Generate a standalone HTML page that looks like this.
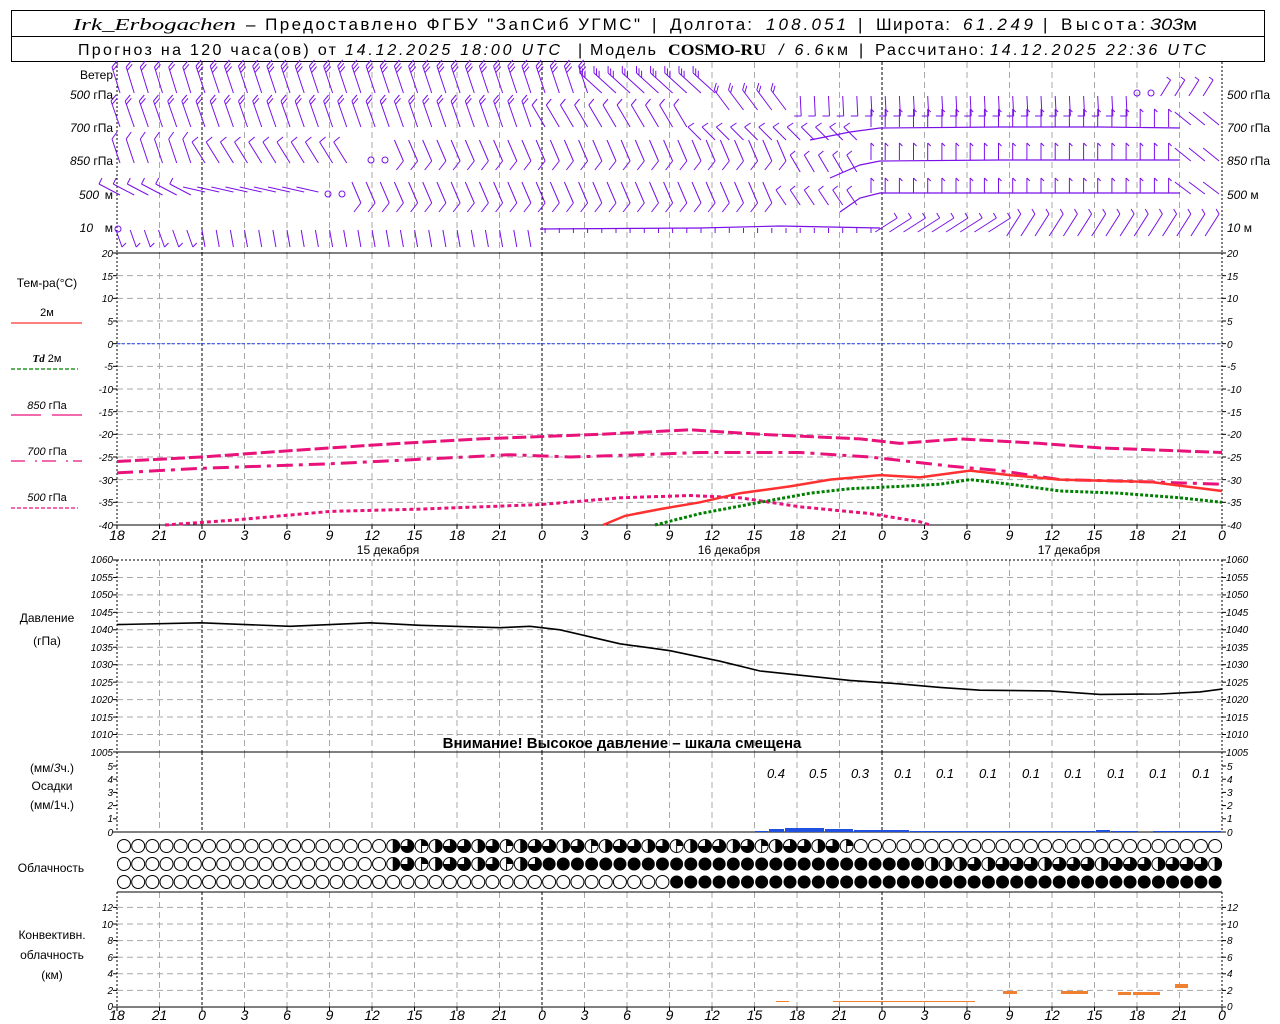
<!DOCTYPE html>
<html><head><meta charset="utf-8"><style>
html,body{margin:0;padding:0;background:#fff;}
svg{display:block;}
text{font-family:"Liberation Sans",sans-serif;fill:#000;}
.it{font-style:italic;}
.ax{font-size:10px;font-style:italic;}
.lb{font-size:12px;}
</style></head><body>
<svg id="s" width="1280" height="1024" viewBox="0 0 1280 1024" xmlns="http://www.w3.org/2000/svg">
<rect x="0" y="0" width="1280" height="1024" fill="#fff"/>
<rect x="11.5" y="10.5" width="1253" height="51" fill="none" stroke="#000"/>
<line x1="11" y1="36.5" x2="1265" y2="36.5" stroke="#000"/>
<g font-size="17">
<text x="73" y="30" textLength="163" lengthAdjust="spacingAndGlyphs" style="font-family:'Liberation Serif',serif;font-style:italic">Irk_Erbogachen</text>
<text x="246" y="30" textLength="394" lengthAdjust="spacing">– Предоставлено ФГБУ "ЗапСиб УГМС"</text>
<text x="652" y="30">|</text>
<text x="670" y="30" textLength="82" lengthAdjust="spacing">Долгота:</text>
<text x="766" y="30" class="it" textLength="80" lengthAdjust="spacing">108.051</text>
<text x="858" y="30">|</text>
<text x="876" y="30" textLength="74" lengthAdjust="spacing">Широта:</text>
<text x="963" y="30" class="it" textLength="70" lengthAdjust="spacing">61.249</text>
<text x="1043" y="30">|</text>
<text x="1061" y="30" textLength="84" lengthAdjust="spacing">Высота:</text>
<text x="1150" y="30" textLength="47" lengthAdjust="spacingAndGlyphs"><tspan class="it">303</tspan>м</text>
</g>
<g font-size="16">
<text x="78" y="55" textLength="258" lengthAdjust="spacing">Прогноз на 120 часа(ов) от</text>
<text x="345" y="55" class="it" textLength="215" lengthAdjust="spacing">14.12.2025 18:00 UTC</text>
<text x="578" y="55" textLength="78" lengthAdjust="spacing">| Модель</text>
<text x="668" y="55" font-weight="bold" textLength="98" lengthAdjust="spacingAndGlyphs" style="font-family:'Liberation Serif',serif">COSMO-RU</text>
<text x="779" y="55" textLength="69" lengthAdjust="spacing"><tspan class="it">/ 6.6</tspan>км</text>
<text x="859" y="55">|</text>
<text x="875" y="55" textLength="109" lengthAdjust="spacing">Рассчитано:</text>
<text x="990" y="55" class="it" textLength="216" lengthAdjust="spacing">14.12.2025 22:36 UTC</text>
</g>
<g id="grid"></g>
<g id="plot"></g>
<g class="lb" font-size="11">
<text x="113" y="79" text-anchor="end">Ветер</text>
<text x="113" y="99" text-anchor="end"><tspan class="it">500</tspan> гПа</text>
<text x="113" y="132" text-anchor="end"><tspan class="it">700</tspan> гПа</text>
<text x="113" y="165" text-anchor="end"><tspan class="it">850</tspan> гПа</text>
<text x="99" y="199" text-anchor="end" class="it">500</text><text x="113" y="199" text-anchor="end">м</text>
<text x="93" y="232" text-anchor="end" class="it">10</text><text x="113" y="232" text-anchor="end">м</text>
<text x="1227" y="99"><tspan class="it">500</tspan> гПа</text>
<text x="1227" y="132"><tspan class="it">700</tspan> гПа</text>
<text x="1227" y="165"><tspan class="it">850</tspan> гПа</text>
<text x="1227" y="199"><tspan class="it">500</tspan> м</text>
<text x="1227" y="232"><tspan class="it">10</tspan>   м</text>
</g>
<g font-size="12" text-anchor="middle">
<text x="47" y="287">Тем-ра(°С)</text>
<text x="47" y="316" font-size="11">2м</text>
<text x="47" y="362" font-size="11"><tspan class="it" font-weight="bold" style="font-family:'Liberation Serif',serif">Td</tspan>  2м</text>
<text x="47" y="409" font-size="11"><tspan class="it">850</tspan> гПа</text>
<text x="47" y="455" font-size="11"><tspan class="it">700</tspan> гПа</text>
<text x="47" y="501" font-size="11"><tspan class="it">500</tspan> гПа</text>
</g>
<line x1="11" y1="323" x2="82" y2="323" stroke="#ff3030" stroke-width="1.2"/>
<line x1="11" y1="369" x2="78" y2="369" stroke="#008000" stroke-width="1.2" stroke-dasharray="4 2"/>
<line x1="11" y1="415" x2="41" y2="415" stroke="#e8127a" stroke-width="1.2"/>
<line x1="52" y1="415" x2="82" y2="415" stroke="#e8127a" stroke-width="1.2"/>
<line x1="11" y1="461" x2="82" y2="461" stroke="#e8127a" stroke-width="1.2" stroke-dasharray="14 10 2 5"/>
<line x1="11" y1="508" x2="78" y2="508" stroke="#e8127a" stroke-width="1.2" stroke-dasharray="4 2"/>
<g class="ax" text-anchor="end">
<text x="113" y="257">20</text><text x="113" y="280">15</text><text x="113" y="302">10</text><text x="113" y="325">5</text><text x="113" y="348">0</text><text x="113" y="370">-5</text><text x="113" y="393">-10</text><text x="113" y="416">-15</text><text x="113" y="438">-20</text><text x="113" y="461">-25</text><text x="113" y="484">-30</text><text x="113" y="506">-35</text><text x="113" y="529">-40</text>
</g>
<g class="ax">
<text x="1227" y="257">20</text><text x="1227" y="280">15</text><text x="1227" y="302">10</text><text x="1227" y="325">5</text><text x="1227" y="348">0</text><text x="1227" y="370">-5</text><text x="1227" y="393">-10</text><text x="1227" y="416">-15</text><text x="1227" y="438">-20</text><text x="1227" y="461">-25</text><text x="1227" y="484">-30</text><text x="1227" y="506">-35</text><text x="1227" y="529">-40</text>
</g>
<g font-size="14" class="it" text-anchor="middle">
<text x="117" y="540">18</text><text x="159.5" y="540">21</text><text x="202" y="540">0</text><text x="244.5" y="540">3</text><text x="287" y="540">6</text><text x="329.5" y="540">9</text><text x="372" y="540">12</text><text x="414.5" y="540">15</text><text x="457" y="540">18</text><text x="499.5" y="540">21</text><text x="542" y="540">0</text><text x="584.5" y="540">3</text><text x="627" y="540">6</text><text x="669.5" y="540">9</text><text x="712" y="540">12</text><text x="754.5" y="540">15</text><text x="797" y="540">18</text><text x="839.5" y="540">21</text><text x="882" y="540">0</text><text x="924.5" y="540">3</text><text x="967" y="540">6</text><text x="1009.5" y="540">9</text><text x="1052" y="540">12</text><text x="1094.5" y="540">15</text><text x="1137" y="540">18</text><text x="1179.5" y="540">21</text><text x="1222" y="540">0</text>
</g>
<g font-size="12" text-anchor="middle">
<text x="388" y="554">15 декабря</text><text x="729" y="554">16 декабря</text><text x="1069" y="554">17 декабря</text>
</g>
<g font-size="12" text-anchor="middle"><text x="47" y="622">Давление</text><text x="47" y="645">(гПа)</text></g>
<g class="ax" text-anchor="end" font-size="9">
<text x="113" y="563">1060</text><text x="113" y="581">1055</text><text x="113" y="598">1050</text><text x="113" y="616">1045</text><text x="113" y="633">1040</text><text x="113" y="651">1035</text><text x="113" y="668">1030</text><text x="113" y="686">1025</text><text x="113" y="703">1020</text><text x="113" y="721">1015</text><text x="113" y="738">1010</text><text x="113" y="756">1005</text>
</g>
<g class="ax" font-size="9">
<text x="1226" y="563">1060</text><text x="1226" y="581">1055</text><text x="1226" y="598">1050</text><text x="1226" y="616">1045</text><text x="1226" y="633">1040</text><text x="1226" y="651">1035</text><text x="1226" y="668">1030</text><text x="1226" y="686">1025</text><text x="1226" y="703">1020</text><text x="1226" y="721">1015</text><text x="1226" y="738">1010</text><text x="1226" y="756">1005</text>
</g>
<text x="622" y="748" text-anchor="middle" font-size="15" font-weight="bold">Внимание! Высокое давление – шкала смещена</text>
<g font-size="12" text-anchor="middle"><text x="52" y="772">(мм/<tspan class="it">3</tspan>ч.)</text><text x="52" y="790">Осадки</text><text x="52" y="809">(мм/1ч.)</text></g>
<g class="ax" text-anchor="end"><text x="113" y="770">5</text><text x="113" y="783">4</text><text x="113" y="796">3</text><text x="113" y="809">2</text><text x="113" y="822">1</text><text x="113" y="836">0</text></g>
<g class="ax"><text x="1227" y="770">5</text><text x="1227" y="783">4</text><text x="1227" y="796">3</text><text x="1227" y="809">2</text><text x="1227" y="822">1</text><text x="1227" y="836">0</text></g>
<g class="it" font-size="13" text-anchor="middle">
<text x="776" y="778">0.4</text><text x="818" y="778">0.5</text><text x="860" y="778">0.3</text><text x="903" y="778">0.1</text><text x="945" y="778">0.1</text><text x="988" y="778">0.1</text><text x="1031" y="778">0.1</text><text x="1073" y="778">0.1</text><text x="1116" y="778">0.1</text><text x="1158" y="778">0.1</text><text x="1201" y="778">0.1</text>
</g>
<text x="51" y="872" font-size="12" text-anchor="middle">Облачность</text>
<g font-size="12" text-anchor="middle"><text x="52" y="939">Конвективн.</text><text x="52" y="959">облачность</text><text x="52" y="979">(км)</text></g>
<g class="ax" text-anchor="end"><text x="113" y="911">12</text><text x="113" y="928">10</text><text x="113" y="944">8</text><text x="113" y="961">6</text><text x="113" y="977">4</text><text x="113" y="994">2</text><text x="113" y="1010">0</text></g>
<g class="ax"><text x="1227" y="911">12</text><text x="1227" y="928">10</text><text x="1227" y="944">8</text><text x="1227" y="961">6</text><text x="1227" y="977">4</text><text x="1227" y="994">2</text><text x="1227" y="1010">0</text></g>
<g font-size="14" class="it" text-anchor="middle">
<text x="117" y="1020">18</text><text x="159.5" y="1020">21</text><text x="202" y="1020">0</text><text x="244.5" y="1020">3</text><text x="287" y="1020">6</text><text x="329.5" y="1020">9</text><text x="372" y="1020">12</text><text x="414.5" y="1020">15</text><text x="457" y="1020">18</text><text x="499.5" y="1020">21</text><text x="542" y="1020">0</text><text x="584.5" y="1020">3</text><text x="627" y="1020">6</text><text x="669.5" y="1020">9</text><text x="712" y="1020">12</text><text x="754.5" y="1020">15</text><text x="797" y="1020">18</text><text x="839.5" y="1020">21</text><text x="882" y="1020">0</text><text x="924.5" y="1020">3</text><text x="967" y="1020">6</text><text x="1009.5" y="1020">9</text><text x="1052" y="1020">12</text><text x="1094.5" y="1020">15</text><text x="1137" y="1020">18</text><text x="1179.5" y="1020">21</text><text x="1222" y="1020">0</text>
</g>
</svg>
<script>
(function(){
var NS="http://www.w3.org/2000/svg";
var G=document.getElementById('grid'),P=document.getElementById('plot');
function el(p,t,a){var e=document.createElementNS(NS,t);for(var k in a)e.setAttribute(k,a[k]);p.appendChild(e);return e;}
function ln(p,x1,y1,x2,y2,a){a=a||{};a.x1=x1;a.y1=y1;a.x2=x2;a.y2=y2;if(!a.stroke)a.stroke='#000';return el(p,'line',a);}
var L=117,R=1222,S=42.5;
var panels=[[62,253],[253,525],[560,752],[752,832],[892,1007]];
function hg(y){ln(G,L,y,R,y,{stroke:'#a8a8a8','stroke-dasharray':'6 4'});}
for(var t=15;t>=-35;t-=5)hg(253+(20-t)*4.533);
for(var p=1055;p>1005;p-=5)hg(560+(1060-p)*3.49);
for(var k=2;k<=12;k+=2)hg(1007-k*8.3);
panels.forEach(function(pp){
 for(var i=1;i<26;i++){var x=L+S*i;
  if(i==2||i==10||i==18)ln(G,x,pp[0],x,pp[1],{'stroke-dasharray':'3 2'});
  else ln(G,x,pp[0],x,pp[1],{stroke:'#a8a8a8','stroke-dasharray':'6 4'});}
 ln(G,L,pp[0],L,pp[1],{'stroke-dasharray':'2 2'});
 ln(G,R,pp[0],R,pp[1],{'stroke-dasharray':'2 2'});
});
[253,525,752,832,892,1007].forEach(function(y){ln(G,L,y,R,y,{});});
ln(G,L,560,R,560,{'stroke-dasharray':'2 2'});
function ticks(ys){ys.forEach(function(y){ln(G,L-4,y,L,y,{});ln(G,R,y,R+4,y,{});});}
var ty=[];for(var t=20;t>=-40;t-=5)ty.push(253+(20-t)*4.533);ticks(ty);
ty=[];for(var p=1060;p>=1005;p-=5)ty.push(560+(1060-p)*3.49);ticks(ty);
ty=[];for(var v=0;v<=5;v++)ty.push(832-v*13.2);ticks(ty);
ty=[];for(var k=0;k<=12;k+=2)ty.push(1007-k*8.3);ticks(ty);
for(var i=0;i<=26;i++){var x=L+S*i;ln(G,x,525,x,529,{});ln(G,x,1007,x,1011,{});}
ln(G,L,343.7,R,343.7,{stroke:'#2040ff','stroke-dasharray':'3 2'});
function Ty(T){return 253+(20-T)*4.533;}
function poly(pts,fy,a){var s=pts.map(function(q){return q[0]+','+fy(q[1]).toFixed(1);}).join(' ');a.points=s;a.fill='none';return el(P,'polyline',a);}
var pink='#e8127a';
poly([[117,-26],[201,-25],[330,-23],[400,-22],[480,-21],[600,-20],[690,-19],[760,-20],[860,-21],[900,-22],[960,-21],[1040,-22],[1100,-23],[1222,-24]],Ty,{stroke:pink,'stroke-width':3,'stroke-dasharray':'14 4'});
poly([[117,-28.5],[201,-27.5],[330,-26.5],[420,-25.5],[510,-24.5],[570,-25],[640,-24.5],[700,-24],[800,-24],[870,-25],[950,-27],[1000,-28],[1060,-30],[1150,-30.5],[1222,-31]],Ty,{stroke:pink,'stroke-width':3,'stroke-dasharray':'16 6 4 6'});
poly([[165,-40],[230,-39],[280,-38],[330,-37],[420,-36.5],[540,-35.5],[620,-34],[690,-33.5],[740,-34],[800,-36],[870,-37.5],[920,-39.3],[930,-40]],Ty,{stroke:pink,'stroke-width':3,'stroke-dasharray':'4 3'});
poly([[603,-40],[625,-38],[660,-36.5],[700,-35],[740,-33],[790,-31.5],[830,-30],[880,-29],[920,-29.5],[970,-28],[1010,-29],[1060,-30],[1150,-30.5],[1222,-32.5]],Ty,{stroke:'#ff3030','stroke-width':2.5});
poly([[655,-40],[700,-37.5],[760,-35],[810,-33],[850,-32],[900,-31.5],[940,-31],[970,-30],[1010,-31],[1060,-32.5],[1120,-33],[1180,-34],[1222,-35]],Ty,{stroke:'#008000','stroke-width':3,'stroke-dasharray':'3 2'});
poly([[117,1041.5],[201,1042],[290,1041],[370,1042],[420,1041.3],[500,1040.6],[530,1041],[560,1040],[590,1038],[620,1036],[670,1034],[720,1031],[760,1028.2],[800,1027],[850,1025.5],[900,1024.5],[940,1023.5],[980,1022.7],[1050,1022.5],[1100,1021.5],[1160,1021.6],[1200,1022.2],[1222,1023]],function(p){return 560+(1060-p)*3.49;},{stroke:'#000','stroke-width':1.6});
[[755,769,1],[769,785,3],[785,825,4],[825,854,3],[854,910,2],[910,1096,1],[1096,1111,2],[1111,1139,1],[1153,1222,1]].forEach(function(b){el(P,'rect',{x:b[0],y:832-b[2],width:b[1]-b[0]-1,height:b[2],fill:'#2050e0'});});
var og='#f08030';
[[776,789,1001,1],[833,975,1001,1],[1003,1017,991,3],[1061,1088,991,3],[1118,1131,992,3],[1133,1160,992,3],[1175,1188,984,4]].forEach(function(b){el(P,'rect',{x:b[0],y:b[2],width:b[1]-b[0],height:b[3],fill:og});});
function frac(row,c,i){
 var pat=[0.75,0.5,0.75,0.25,0.5,0.75];
 if(row==0){if(c<380||c>=860)return 0;return pat[i%6];}
 if(row==1){if(c<380)return 0;if(c<535)return pat[i%6];if(c<930)return 1;if(c<965)return 0.5;return [0.75,0.5,0.75,0.75][i%4];}
 if(c<668)return 0;return 1;
}
var cy=[846,864,882];
for(var r=0;r<3;r++)for(var i=0;i<78;i++){var c=124+14.17*i,y=cy[r],f=frac(r,c,i),rr=6.5;
 if(f>=1){el(P,'circle',{cx:c,cy:y,r:rr,fill:'#000'});continue;}
 el(P,'circle',{cx:c,cy:y,r:rr,fill:'#fff',stroke:'#000','stroke-width':1});
 if(f>0){var a=f*2*Math.PI,x2=c+rr*Math.sin(a),y2=y-rr*Math.cos(a);
  el(P,'path',{d:'M'+c+','+y+' L'+c+','+(y-rr)+' A'+rr+','+rr+' 0 '+(f>0.5?1:0)+' 1 '+x2.toFixed(1)+','+y2.toFixed(1)+' Z',fill:'#000'});
  if(f==0.5||f==0.25)ln(P,c,y-rr,c,y+rr,{'stroke-width':1});}
}
var W='#7a10e8';
function barb(x0,y0,dx,dy,nf,fx,fy){
 var d='M'+x0.toFixed(1)+','+y0+' l'+dx+','+dy;
 var len=Math.sqrt(dx*dx+dy*dy),ux=dx/len,uy=dy/len;
 for(var k=0;k<nf;k++){var px=x0+dx-ux*3.5*k,py=y0+dy-uy*3.5*k;d+=' M'+px.toFixed(1)+','+py.toFixed(1)+' l'+fx+','+fy;}
 el(P,'path',{d:d,stroke:W,'stroke-width':1,fill:'none'});
}
function circ(x,y){el(P,'circle',{cx:x,cy:y,r:3,fill:'none',stroke:W,'stroke-width':1});}
for(var i=0;i<78;i++){var x=120+14.17*i;
 if(x<201)barb(x,93,-8,-26,2,5,-6);
 else if(x<600)barb(x,93,-9,-27,3,5,-6);
 else if(x<720)barb(x,93,-22,-20,3,0,-7);
 else if(x<800)barb(x,110,-15,-20,2,2,-7);
 else if(x<1130)barb(x,96,1,20,1,-7,0);
 else if(x>1160)barb(x-8,96,10,-16,1,-4,-3);
 if(x<540)barb(x,127,-9,-26,2,5,-6);
 else if(x<700)barb(x,127,-13,-22,1,5,-6);
 else if(x<870)barb(x,140,-13,-13,1,6,-4);
 else if(x<1180)barb(x,127,0,-18,1,3,3);
 else barb(x-8,112,16,13,0,0,0);
 if(x<201)barb(x,163,-8,-24,1,5,-7);
 else if(x<360)barb(x,163,-13,-21,1,6,-5);
 else if(x<395){}
 else if(x<800)barb(x-9,140,9,21,1,-7,9);
 else if(x<870)barb(x,172,-10,-17,1,5,-4);
 else if(x<1180)barb(x,160,0,-17,1,3,3);
 else barb(x-8,148,16,13,0,0,0);
 if(x<201)barb(x,195,-21,-11,1,3,-6);
 else if(x<320)barb(x,192,-22,-5,0,0,0);
 else if(x<355){}
 else if(x<780)barb(x-9,182,9,21,1,-7,9);
 else if(x<860)barb(x,205,-10,-15,1,5,-4);
 else if(x<1180)barb(x,193,0,-15,1,3,3);
 else barb(x-8,182,16,12,0,0,0);
 if(x<201)barb(x-4,230,6,17,1,4,-4);
 else if(x<540)barb(x-3,230,3,17,0,0,0);
 else if(x<880)barb(x,228,0,5,0,0,0);
 else if(x<1000)barb(x-10,232,22,-14,1,-3,-5);
 else barb(x-6,236,14,-22,1,-3,-5);
}
circ(1137,93);circ(1151,93);circ(371,160);circ(385,160);circ(328,194);circ(342,194);circ(118,229);
function wl(pts){el(P,'polyline',{points:pts,fill:'none',stroke:W,'stroke-width':1.2});}
wl('810,140 850,132 880,128 1000,127 1100,127 1180,128');
wl('830,178 860,165 880,161 1000,160 1100,160 1180,160');
wl('840,212 860,198 880,193 1000,193 1100,193 1180,193');
wl('540,229 700,228 780,226 880,228');
})();
</script>
</body></html>
